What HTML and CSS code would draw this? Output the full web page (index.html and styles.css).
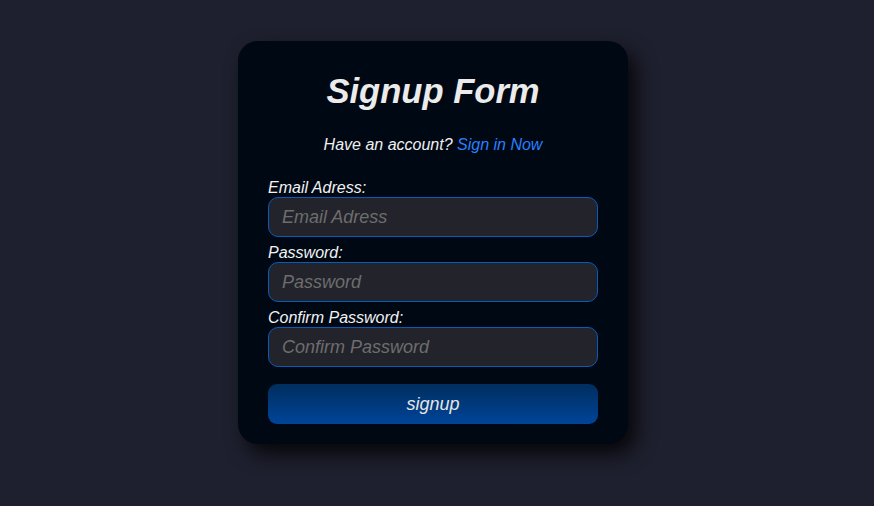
FILE: index.html
```html
<!DOCTYPE html>
<html lang="en">
<head>
<meta charset="utf-8">
<title>Signup Form</title>
<link rel="stylesheet" href="styles.css">
</head>
<body>
<main class="page">
  <form class="card">
    <h1 class="title">Signup Form</h1>
    <p class="subtitle">Have an account? <a href="#" class="link">Sign in Now</a></p>
    <div class="fields">
      <label class="label" for="email">Email Adress:</label>
      <input class="input" id="email" type="email" placeholder="Email Adress">
      <label class="label" for="pw">Password:</label>
      <input class="input" id="pw" type="password" placeholder="Password">
      <label class="label" for="pw2">Confirm Password:</label>
      <input class="input" id="pw2" type="password" placeholder="Confirm Password">
    </div>
    <button class="button" type="button">signup</button>
  </form>
</main>
</body>
</html>
```
FILE: styles.css
```css
* { box-sizing: border-box; }
html, body { margin: 0; height: 100%; }
body {
  background: #1f202f;
  font-family: "Liberation Sans", Arial, sans-serif;
  font-style: italic;
  color: #eaeaea;
}
.page {
  display: flex;
  justify-content: center;
  padding: 41px 8px 0 0;
}
.card {
  width: 390px;
  background: #000814;
  border-radius: 20px;
  padding: 30px 30px 20px;
  box-shadow: 8px 10px 20px rgba(0, 0, 0, 0.8);
  display: flex;
  flex-direction: column;
}
.title {
  margin: 0;
  text-align: center;
  font-size: 34.6px;
  line-height: 40px;
  font-weight: bold;
  font-style: italic;
  color: #ebebeb;
}
.subtitle {
  margin: 25px 0 0;
  text-align: center;
  font-size: 16px;
  line-height: 18px;
  color: #f0f0f0;
}
.link { color: #2a80ff; text-decoration: none; }
.fields {
  display: flex;
  flex-direction: column;
  margin-top: 25px;
}
.label {
  font-size: 16px;
  line-height: 18px;
  color: #f2f2f2;
}
.input {
  height: 40px;
  margin: 0 0 7px;
  padding: 0 13px;
  background: #22232b;
  border: 1px solid #0b5ab8;
  border-radius: 10px;
  font-family: "Liberation Sans", Arial, sans-serif;
  font-style: italic;
  font-size: 18px;
  color: #ddd;
  outline: none;
}
.input:last-child { margin-bottom: 0; }
.input::placeholder { color: #6d6d6d; }
.button {
  margin-top: 17px;
  height: 40px;
  border: none;
  border-radius: 9px;
  background: linear-gradient(to bottom, #002e5e, #00449a);
  font-family: "Liberation Sans", Arial, sans-serif;
  font-style: italic;
  font-size: 18px;
  color: #e6e6e6;
  cursor: pointer;
}
```
